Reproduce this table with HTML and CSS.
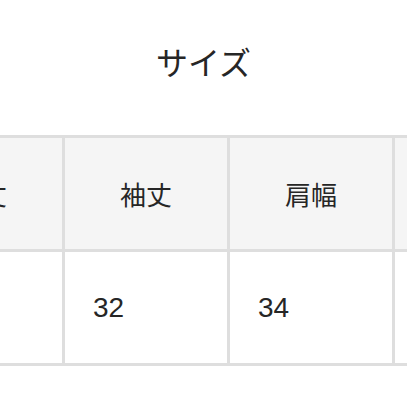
FILE: index.html
```html
<!DOCTYPE html>
<html lang="ja">
<head>
<meta charset="utf-8">
<link rel="stylesheet" href="styles.css">
</head>
<body>
<div class="page">
  <h2 class="title">サイズ</h2>
  <div class="size-table">
    <div class="cell head">着丈</div>
    <div class="cell head">袖丈</div>
    <div class="cell head">肩幅</div>
    <div class="cell head">身幅</div>
    <div class="cell val">66</div>
    <div class="cell val">32</div>
    <div class="cell val">34</div>
    <div class="cell val">48</div>
  </div>
</div>
</body>
</html>
```
FILE: styles.css
```css
html, body {
  margin: 0;
  padding: 0;
  overflow: hidden;
  background: #fff;
}
body {
  font-family: "Liberation Sans", "Noto Sans CJK JP", sans-serif;
  color: #262626;
}
.page {
  width: 407px;
  height: 407px;
  overflow: hidden;
}
.title {
  margin: 44px 0 0;
  height: 40px;
  line-height: 40px;
  font-size: 32px;
  font-weight: 400;
  text-align: center;
  color: #262626;
}
.size-table {
  margin-top: 51px;
  margin-left: -103px;
  width: max-content;
  display: grid;
  grid-template-columns: repeat(4, 162px);
  grid-template-rows: 111px 111px;
  gap: 3px;
  padding: 3px;
  background: #dedede;
}
.cell {
  display: flex;
  align-items: center;
  background: #fff;
}
.head {
  justify-content: center;
  background: #f5f5f5;
  font-size: 26px;
}
.val {
  padding-left: 28px;
  font-size: 28px;
}
```
